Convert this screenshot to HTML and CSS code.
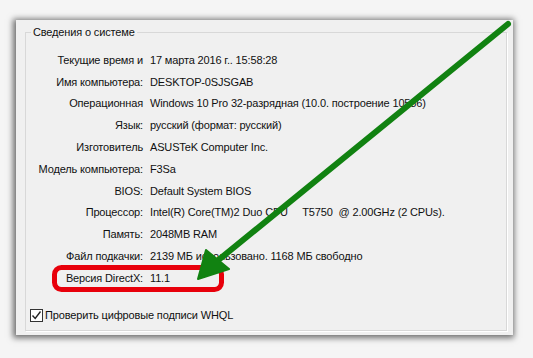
FILE: index.html
```html
<!DOCTYPE html>
<html lang="ru">
<head>
    <meta charset="UTF-8">
    <title>Сведения о системе</title>
    <link rel="stylesheet" href="styles.css">
</head>
<body>
    <div class="window">
        <fieldset class="group">
            <legend>Сведения о системе</legend>
            <div class="info">
                <span class="label">Текущие время и</span><span class="value">17 марта 2016 г.. 15:58:28</span>
                <span class="label">Имя компьютера:</span><span class="value">DESKTOP-0SJSGAB</span>
                <span class="label">Операционная</span><span class="value">Windows 10 Pro 32-разрядная (10.0. построение 10586)</span>
                <span class="label">Язык:</span><span class="value">русский (формат: русский)</span>
                <span class="label">Изготовитель</span><span class="value">ASUSTeK Computer Inc.</span>
                <span class="label">Модель компьютера:</span><span class="value">F3Sa</span>
                <span class="label">BIOS:</span><span class="value">Default System BIOS</span>
                <span class="label">Процессор:</span><span class="value">Intel(R) Core(TM)2 Duo CPU&nbsp;&nbsp;&nbsp;&nbsp; T5750&nbsp; @ 2.00GHz (2 CPUs).</span>
                <span class="label">Память:</span><span class="value">2048MB RAM</span>
                <span class="label">Файл подкачки:</span><span class="value">2139 МБ использовано. 1168 МБ свободно</span>
                <span class="label">Версия DirectX:</span><span class="value">11.1</span>
            </div>
            <label class="check">
                <span class="box">
                    <svg width="11" height="11" viewBox="0 0 11 11"><path d="M1.5 5.5 L4.2 8.5 L9.5 1.5" fill="none" stroke="#222" stroke-width="1.4"/></svg>
                </span>
                Проверить цифровые подписи WHQL
            </label>
        </fieldset>
    </div>

    <!-- пометки поверх скриншота -->
    <svg class="marks" width="533" height="358" viewBox="0 0 533 358">
        <rect x="54.5" y="267.5" width="167" height="22" rx="7" fill="none" stroke="#e8000b" stroke-width="5"/>
        <line x1="508" y1="24" x2="216" y2="262" stroke="#118211" stroke-width="6" stroke-linecap="round"/>
        <polygon points="198,279 206,250 229,269" fill="#118211" stroke="#118211" stroke-width="2" stroke-linejoin="round"/>
    </svg>
</body>
</html>
```

FILE: styles.css
```css
body {
    margin: 0;
    width: 533px;
    height: 358px;
    position: relative;
    overflow: hidden;
    background-color: #f5f5f5;
    font-family: 'Liberation Sans', Arial, sans-serif;
    font-size: 11px;
    letter-spacing: -0.15px;
    color: #111;
}
.window {
    margin: 20px 0 0 16px;
    width: 497px;
    height: 315px;
    box-sizing: border-box;
    padding: 5px 6px 4px 9px;
    background-color: #f0f0f0;
    box-shadow: -1px 1px 6px 2px rgba(0,0,0,0.55);
}
.group {
    margin: 0;
    padding: 0;
    height: 100%;
    box-sizing: border-box;
    border: 1px solid #d8d8d8;
    box-shadow: 1px 1px 0 #fff;
}
.group legend {
    margin-left: 5px;
    padding: 0 2px;
    line-height: 14px;
}
.info {
    display: grid;
    grid-template-columns: 117px 1fr;
    grid-auto-rows: 21.8px;
    column-gap: 7px;
    align-items: center;
    margin-top: 10px;
}
.label {
    text-align: right;
    white-space: nowrap;
}
.value {
    white-space: nowrap;
}
.check {
    display: flex;
    align-items: center;
    gap: 2px;
    margin: 20px 0 0 4px;
}
.box {
    width: 11px;
    height: 11px;
    border: 1px solid #333;
    background-color: #fff;
    display: flex;
}
.marks {
    position: absolute;
    left: 0;
    top: 0;
}
```
